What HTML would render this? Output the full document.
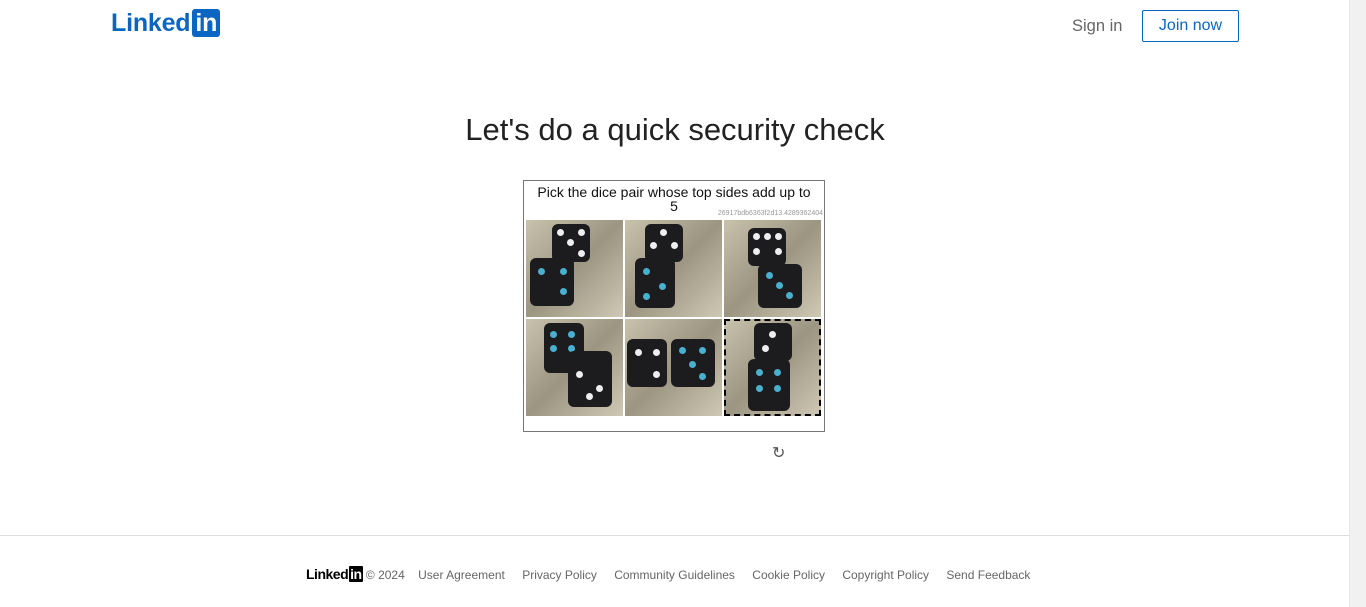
<!DOCTYPE html>
<html><head><meta charset="utf-8"><style>
body{margin:0;width:1366px;height:607px;overflow:hidden;background:#fff;font-family:"Liberation Sans",sans-serif;position:relative}
.sb{position:absolute;right:0;top:0;width:16px;height:607px;background:#f1f1f1;border-left:1px solid #e6e6e6}
.logo{position:absolute;left:111px;top:9px;font-weight:bold;font-size:25px;color:#0a66c2;letter-spacing:-0.2px}
.logo .in{display:inline-block;background:#0a66c2;color:#fff;border-radius:3px;padding:0 3px;margin-left:2px;line-height:28px;font-size:25px}
.signin{position:absolute;left:1072px;top:17px;font-size:16.5px;color:#666}
.join{position:absolute;left:1142px;top:10px;width:95px;height:30px;border:1px solid #0a66c2;color:#0a66c2;font-size:16px;text-align:center;line-height:30px;border-radius:2px}
h1{position:absolute;top:112px;left:0;width:1350px;text-align:center;margin:0;font-weight:normal;font-size:31px;color:#222}
.box{position:absolute;left:523px;top:180px;width:300px;height:250px;border:1px solid #777}
.q{text-align:center;font-size:14px;color:#111;line-height:14px;margin-top:4px}
.hash{position:absolute;right:1px;top:29px;font-size:7px;color:#999}
.t{position:absolute;width:97px;height:97px;background:linear-gradient(135deg,#c9c2ad,#9b9581 50%,#cfc8b4);overflow:hidden}
.d{position:absolute;width:38px;height:38px;background:#1c1c1f;border-radius:6px}
.p{position:absolute;width:7px;height:7px;border-radius:50%;background:#eee}
.b{background:#4ab0d0}
.sel{outline:2px dashed #000;outline-offset:-2px}
.ref{position:absolute;left:772px;top:443px;font-size:16px;color:#555}
.foot{position:absolute;top:535px;left:0;width:1350px;border-top:1px solid #ddd}
.fl{position:absolute;top:566px;left:306px;font-size:12px;color:#666;white-space:nowrap}
.fl span{margin-right:14px}
.fl b{color:#000;font-size:14px;letter-spacing:-0.5px}
.fl i{font-style:normal;background:#000;color:#fff;padding:0 1px;margin-left:1px;border-radius:1px}
</style></head><body>
<div class="logo">Linked<span class="in">in</span></div>
<div class="signin">Sign in</div>
<div class="join">Join now</div>
<h1>Let's do a quick security check</h1>
<div class="box">
<div class="q">Pick the dice pair whose top sides add up to<br>5</div>
<div class="hash">26917bdb6363f2d13.4289362404</div>
</div>
<div class="t" style="left:526px;top:220px"><div class="d" style="left:26px;top:4px"><div class="p" style="left:5px;top:5px"></div><div class="p" style="left:26px;top:5px"></div><div class="p" style="left:15px;top:15px"></div><div class="p" style="left:26px;top:26px"></div></div><div class="d" style="left:4px;top:38px;width:44px;height:48px"><div class="p b" style="left:8px;top:10px"></div><div class="p b" style="left:30px;top:30px"></div><div class="p b" style="left:30px;top:10px"></div></div></div>
<div class="t" style="left:625px;top:220px"><div class="d" style="left:20px;top:4px"><div class="p" style="left:15px;top:5px"></div><div class="p" style="left:5px;top:18px"></div><div class="p" style="left:26px;top:18px"></div></div><div class="d" style="left:10px;top:38px;width:40px;height:50px"><div class="p b" style="left:8px;top:10px"></div><div class="p b" style="left:24px;top:25px"></div><div class="p b" style="left:8px;top:35px"></div></div></div>
<div class="t" style="left:724px;top:220px"><div class="d" style="left:24px;top:8px"><div class="p" style="left:5px;top:5px"></div><div class="p" style="left:16px;top:5px"></div><div class="p" style="left:27px;top:5px"></div><div class="p" style="left:5px;top:20px"></div><div class="p" style="left:27px;top:20px"></div></div><div class="d" style="left:34px;top:44px;width:44px;height:44px"><div class="p b" style="left:8px;top:8px"></div><div class="p b" style="left:28px;top:28px"></div><div class="p b" style="left:18px;top:18px"></div></div></div>
<div class="t" style="left:526px;top:319px"><div class="d" style="left:18px;top:4px;width:40px;height:50px"><div class="p b" style="left:6px;top:8px"></div><div class="p b" style="left:24px;top:8px"></div><div class="p b" style="left:6px;top:22px"></div><div class="p b" style="left:24px;top:22px"></div></div><div class="d" style="left:42px;top:32px;width:44px;height:56px"><div class="p" style="left:8px;top:20px"></div><div class="p" style="left:28px;top:34px"></div><div class="p" style="left:18px;top:42px"></div></div></div>
<div class="t" style="left:625px;top:319px"><div class="d" style="left:2px;top:20px;width:40px;height:48px"><div class="p" style="left:8px;top:10px"></div><div class="p" style="left:26px;top:10px"></div><div class="p" style="left:26px;top:32px"></div></div><div class="d" style="left:46px;top:20px;width:44px;height:48px"><div class="p b" style="left:8px;top:8px"></div><div class="p b" style="left:28px;top:8px"></div><div class="p b" style="left:18px;top:22px"></div><div class="p b" style="left:28px;top:34px"></div></div></div>
<div class="t sel" style="left:724px;top:319px"><div class="d" style="left:30px;top:4px"><div class="p" style="left:15px;top:8px"></div><div class="p" style="left:8px;top:22px"></div></div><div class="d" style="left:24px;top:40px;width:42px;height:52px"><div class="p b" style="left:8px;top:10px"></div><div class="p b" style="left:26px;top:10px"></div><div class="p b" style="left:8px;top:26px"></div><div class="p b" style="left:26px;top:26px"></div></div></div>
<div class="ref">&#x21bb;</div>
<div class="foot"></div>
<div class="fl"><b>Linked<i>in</i></b> © 2024 &nbsp;&nbsp;&nbsp;<span>User Agreement</span> <span>Privacy Policy</span> <span>Community Guidelines</span> <span>Cookie Policy</span> <span>Copyright Policy</span> <span>Send Feedback</span></div>
<div class="sb"></div>
</body></html>
